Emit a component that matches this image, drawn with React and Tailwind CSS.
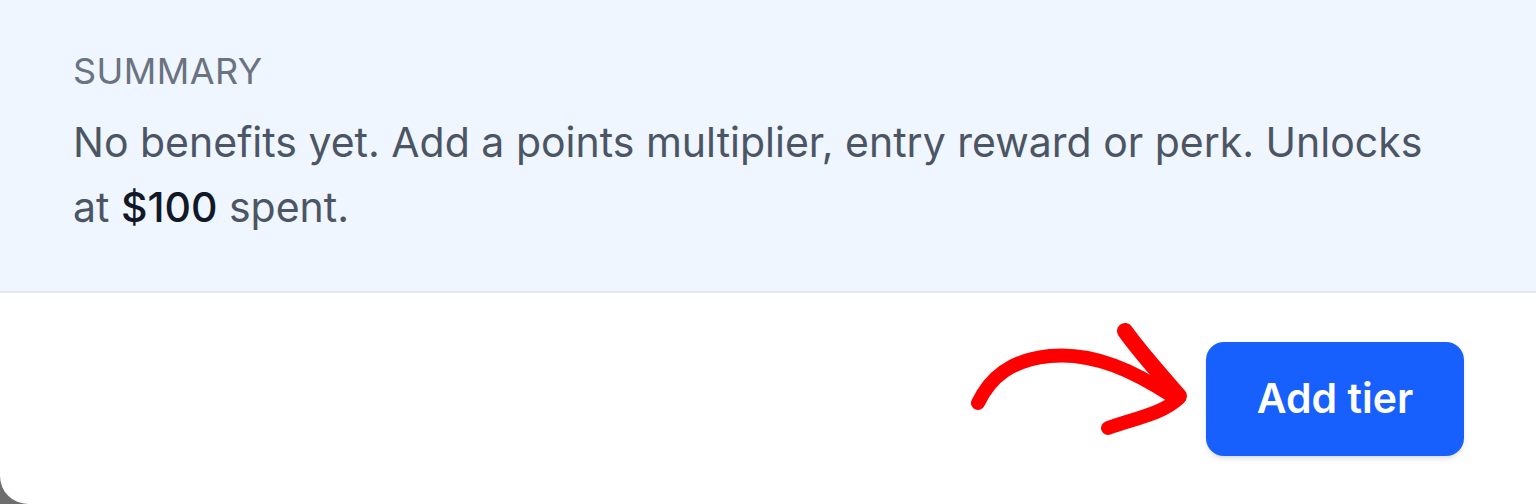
import React from 'react';

const CurvedArrow = () => (
  <svg
    width="235"
    height="158"
    viewBox="960 320 235 158"
    fill="none"
    className="shrink-0"
  >
    <path
      d="M978 403 C 990 378, 1010 360, 1050 356 C 1095 352, 1135 372, 1172 396"
      stroke="#ff0000"
      strokeWidth="14"
      strokeLinecap="round"
      strokeLinejoin="round"
    />
    <path
      d="M1125 331 C 1140 352, 1158 372, 1179 396"
      stroke="#ff0000"
      strokeWidth="16"
      strokeLinecap="round"
      strokeLinejoin="round"
    />
    <path
      d="M1179 398 C 1162 414, 1136 418, 1108 428"
      stroke="#ff0000"
      strokeWidth="14"
      strokeLinecap="round"
      strokeLinejoin="round"
    />
  </svg>
);

const App = () => {
  return (
    <div className="h-[504px] w-full bg-[#6e6e6e] overflow-hidden" style={{ fontFamily: 'Inter, "Noto Sans", sans-serif' }}>
      <div className="flex h-full flex-col bg-white rounded-bl-[28px] overflow-hidden">
        <div className="h-[293px] shrink-0 border-b-2 border-[#e3e6eb] bg-[#eff6ff] px-[73px] pt-[51px]">
          <p className="text-[36px] leading-[40px] tracking-[0.012em] text-[#6b7280]">SUMMARY</p>
          <p className="mt-[19px] text-[41px] leading-[65px] text-[#4b5563]">
            No benefits yet. Add a points multiplier, entry reward or perk. Unlocks at{' '}
            <span className="font-medium text-[#111827]">$100</span> spent.
          </p>
        </div>

        <div className="flex flex-1 items-center justify-end pr-[72px]">
          <CurvedArrow />
          <button
            type="button"
            className="ml-[11px] h-[114px] w-[258px] rounded-[18px] bg-[#1760fd] text-[41px] font-semibold text-white shadow-md"
          >
            Add tier
          </button>
        </div>
      </div>
    </div>
  );
};

export default App;
